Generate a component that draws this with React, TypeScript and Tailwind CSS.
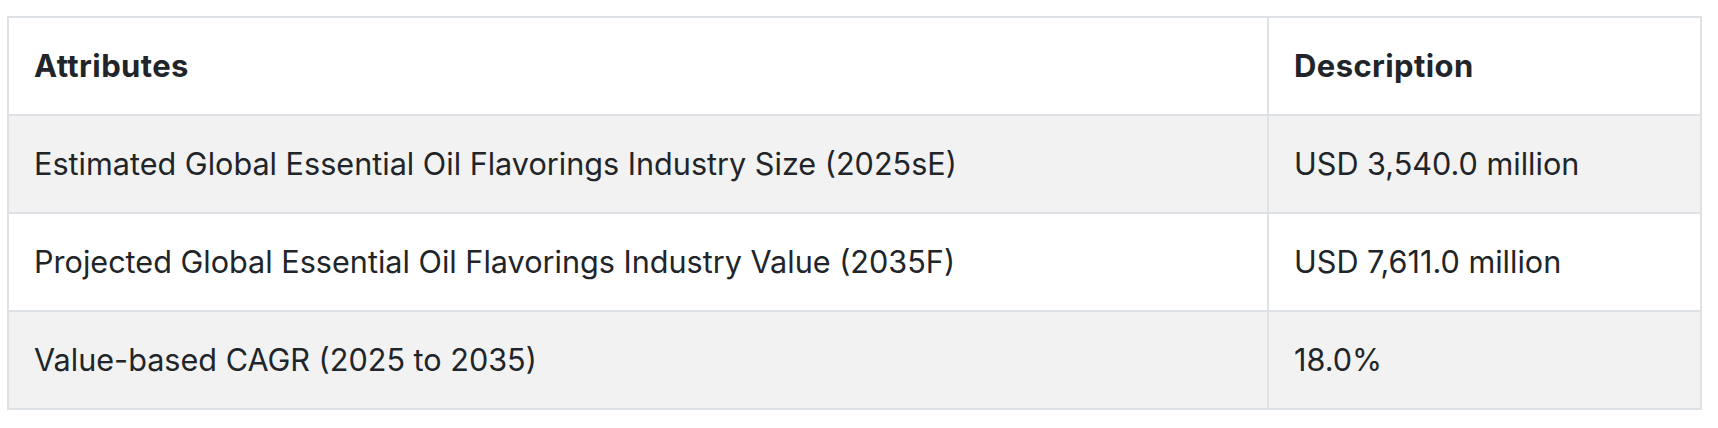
import React from "react";

const rows = [
  ["Estimated Global Essential Oil Flavorings Industry Size (2025sE)", "USD 3,540.0 million"],
  ["Projected Global Essential Oil Flavorings Industry Value (2035F)", "USD 7,611.0 million"],
  ["Value-based CAGR (2025 to 2035)", "18.0%"],
];

export default function App() {
  return (
    <div className="w-[1718px] h-[428px] bg-white pt-[16px] pl-[7px]" style={{ fontFamily: "Inter, 'Noto Sans', sans-serif" }}>
      <table className="w-[1695px] border-collapse text-[30.6px] leading-[1.2] text-[#212529]">
        <thead>
          <tr className="h-[98px] bg-white">
            <th className="w-[1260px] border-2 border-[#dee2e6] px-[25px] text-left text-[31px] font-bold tracking-[0.4px]">Attributes</th>
            <th className="border-2 border-[#dee2e6] px-[25px] text-left text-[31px] font-bold tracking-[0.4px]">Description</th>
          </tr>
        </thead>
        <tbody>
          {rows.map((r, i) => (
            <tr key={i} className={i % 2 === 0 ? "h-[98px] bg-[#f2f2f2]" : "h-[98px] bg-white"}>
              <td className="border-2 border-[#dee2e6] px-[25px] font-normal">{r[0]}</td>
              <td className="border-2 border-[#dee2e6] px-[25px] font-normal">{r[1]}</td>
            </tr>
          ))}
        </tbody>
      </table>
    </div>
  );
}
